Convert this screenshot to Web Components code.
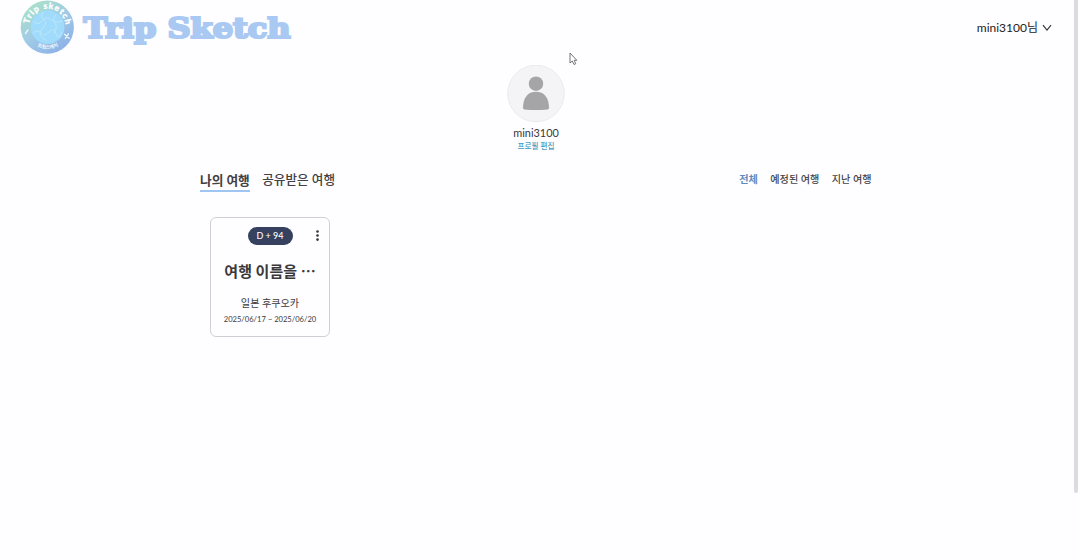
<!DOCTYPE html>
<html lang="ko">
<head>
<meta charset="utf-8">
<title>Trip Sketch</title>
<style>
html,body{margin:0;height:100%;overflow:hidden;background:#fefdff}
body{font-family:Lato,"Noto Sans CJK KR",sans-serif;color:#3c3a3d}
</style>
</head>
<body>
<trip-app></trip-app>
<script>
const define = (name, html) => {
  const t = document.createElement('template');
  t.innerHTML = html;
  customElements.define(name, class extends HTMLElement {
    constructor() {
      super();
      this.attachShadow({ mode: 'open' }).append(t.content.cloneNode(true));
    }
  });
};

define('trip-logo', `
<style>:host{display:block;width:300px;height:60px}svg{display:block}</style>
<svg width="300" height="60" viewBox="0 0 300 60">
  <defs>
    <linearGradient id="g" x1=".15" y1=".1" x2=".75" y2=".95">
      <stop offset="0" stop-color="#a9e0c9"/><stop offset=".5" stop-color="#a0cbe6"/><stop offset="1" stop-color="#8db2e8"/>
    </linearGradient>
    <path id="top" d="M29 27A18.400 18.400 0 0 1 65.800 27"/>
    <path id="bot" d="M25 26.500A22.500 22.500 0 0 0 70 26.500"/>
  </defs>
  <circle cx="47.3" cy="27.2" r="26.6" fill="url(#g)"/>
  <circle cx="47.6" cy="27.2" r="16.800" fill="#a1dbfb"/>
  <path d="M33 21q5 5 9 0t8-2 6 3 7-1M33 33q5-4 8 0t8-1 7 2 6-2M43 12q-3 5 1 8t-2 9 5 12M56 15q-4 4-1 8t-1 10" fill="none" stroke="#c9ecfa" stroke-width=".6"/>
  <g fill="#fff" font-family="Lato,'Noto Sans CJK KR',sans-serif" font-weight="900">
    <text font-size="8.500" stroke="#fff" stroke-width=".3"><textPath href="#top" startOffset="3" textLength="52">Trip sketch</textPath></text>
    <text font-size="5" font-weight="700" opacity=".9"><textPath href="#bot" startOffset="24.500" textLength="22">트립스케치</textPath></text>
  </g>
  <path d="M25.500 33.500l2.500-3.500M64.500 34.300l4.600 3.900M68.400 33.900l-3 4.500" stroke="#e8f7fa" stroke-width="1.400" stroke-linecap="round"/>
  <text x="83.500" y="37.500" textLength="207" lengthAdjust="spacingAndGlyphs" font-family="'DejaVu Serif',serif" font-weight="700" font-size="27" fill="#a9c9f3" stroke="#a9c9f3" stroke-width="2.200" stroke-linejoin="miter">Trip Sketch</text>
</svg>`);

define('user-menu', `
<style>:host{display:flex;align-items:center;gap:4px;font-size:12px;line-height:18px;color:#222}svg{display:block}</style>
<span><slot></slot></span>
<svg width="10" height="8" viewBox="0 0 10 8"><path d="M1 1.2l4 5 4-5" fill="none" stroke="#333" stroke-width="1.100"/></svg>`);

define('top-bar', `
<style>:host{display:flex;justify-content:space-between;height:60px}user-menu{height:18px;margin:19px 28px 0 0}</style>
<trip-logo></trip-logo><user-menu><slot name="user"></slot></user-menu>`);

define('user-profile', `
<style>
:host{display:flex;flex-direction:column;align-items:center;width:1072px;height:110px;padding-top:5px;box-sizing:border-box}
svg{display:block}
.name{font-size:10.900px;line-height:14px;margin-top:3px;color:#39373a}
.edit{font-size:7.600px;line-height:10px;font-weight:500;color:#4799bf;margin-top:1px}
</style>
<svg width="58" height="58" viewBox="0 0 58 58">
  <circle cx="29" cy="28.500" r="28.300" fill="#f4f3f5" stroke="#e7e6e8" stroke-width=".8"/>
  <circle cx="29" cy="18.700" r="7.200" fill="#a5a4a6"/>
  <path d="M16 43C16 32.500 21 26.800 29 26.800s13 5.700 13 16.200q0 1.300-1.500 1.500-11.500 1-23 0-1.500-.2-1.500-1.500z" fill="#a5a4a6"/>
</svg>
<div class="name"><slot></slot></div>
<div class="edit"><slot name="edit"></slot></div>`);

define('tab-item', `
<style>
:host{display:block;box-sizing:border-box;height:22px;padding-top:1px;font-size:12.600px;line-height:18px;font-weight:500;white-space:nowrap;color:#414042}
:host([active]){font-weight:700;font-size:12.700px;border-bottom:2px solid #9fc6f1}
</style><slot></slot>`);

define('filter-item', `
<style>
:host{display:block;font-size:10.100px;line-height:18px;font-weight:500;white-space:nowrap;color:#454446}
:host([active]){font-weight:700;color:#6089bd}
</style><slot></slot>`);

define('trip-nav', `
<style>
:host{display:flex;justify-content:space-between;margin:0 208.500px 0 200px;height:23px}
div{display:flex;gap:12.500px}
</style>
<div><slot name="tab"></slot></div><div><slot name="filter"></slot></div>`);

define('trip-card', `
<style>
:host{display:flex;flex-direction:column;align-items:center;box-sizing:border-box;width:120px;height:119.500px;border:1px solid #d0cfd7;border-radius:6px;padding-top:9px}
.top{display:grid;grid-template-columns:1fr 45px 1fr;width:100%;align-items:center}
.badge{height:18px;line-height:18px;border-radius:9px;background:#35415f;color:#fff;text-align:center;font-size:9px;font-weight:500}
svg{display:block;justify-self:end;margin-right:9px}
.title{font-size:15px;line-height:22px;font-weight:700;margin-top:15px;white-space:nowrap;color:#39383a}
.place{font-size:10.100px;line-height:15px;margin-top:14px}
.date{font-size:7.600px;line-height:10px;margin-top:3px;white-space:nowrap}
</style>
<div class="top"><i></i><div class="badge"><slot name="dday"></slot></div>
<svg width="5" height="12" viewBox="0 0 5 12" fill="#333"><circle cx="2.500" cy="1.500" r="1.300"/><circle cx="2.500" cy="5.500" r="1.300"/><circle cx="2.500" cy="9.600" r="1.300"/></svg></div>
<div class="title"><slot name="title"></slot></div>
<div class="place"><slot name="place"></slot></div>
<div class="date"><slot name="date"></slot></div>`);

define('mouse-pointer', `
<style>:host{display:block;position:absolute;left:569px;top:52px}svg{display:block}</style>
<svg width="9" height="14" viewBox="0 0 9 14"><path d="M1 1v10l2.300-2 1.700 3.500 1.700-.8L5.200 8.300h2.600z" fill="#fff" stroke="#66656a" stroke-width=".9"/></svg>`);

define('scroll-thumb', `
<style>:host{display:block;position:absolute;left:1074px;top:0;width:4px;height:493px;background:#dcdbdd;border-radius:0 0 2px 2px}</style>`);

define('trip-app', `
<style>
:host{display:block;height:559px;position:relative;background:#fefdff}
main{padding:24px 0 0 210px}
</style>
<top-bar><span slot="user">mini3100님</span></top-bar>
<user-profile>mini3100<span slot="edit">프로필 편집</span></user-profile>
<trip-nav>
  <tab-item slot="tab" active>나의 여행</tab-item><tab-item slot="tab">공유받은 여행</tab-item>
  <filter-item slot="filter" active>전체</filter-item><filter-item slot="filter">예정된 여행</filter-item><filter-item slot="filter">지난 여행</filter-item>
</trip-nav>
<main><trip-card>
  <span slot="dday">D + 94</span><span slot="title">여행 이름을 ⋯</span><span slot="place">일본 후쿠오카</span><span slot="date">2025/06/17 ~ 2025/06/20</span>
</trip-card></main>
<mouse-pointer></mouse-pointer><scroll-thumb></scroll-thumb>`);
</script>
</body>
</html>
